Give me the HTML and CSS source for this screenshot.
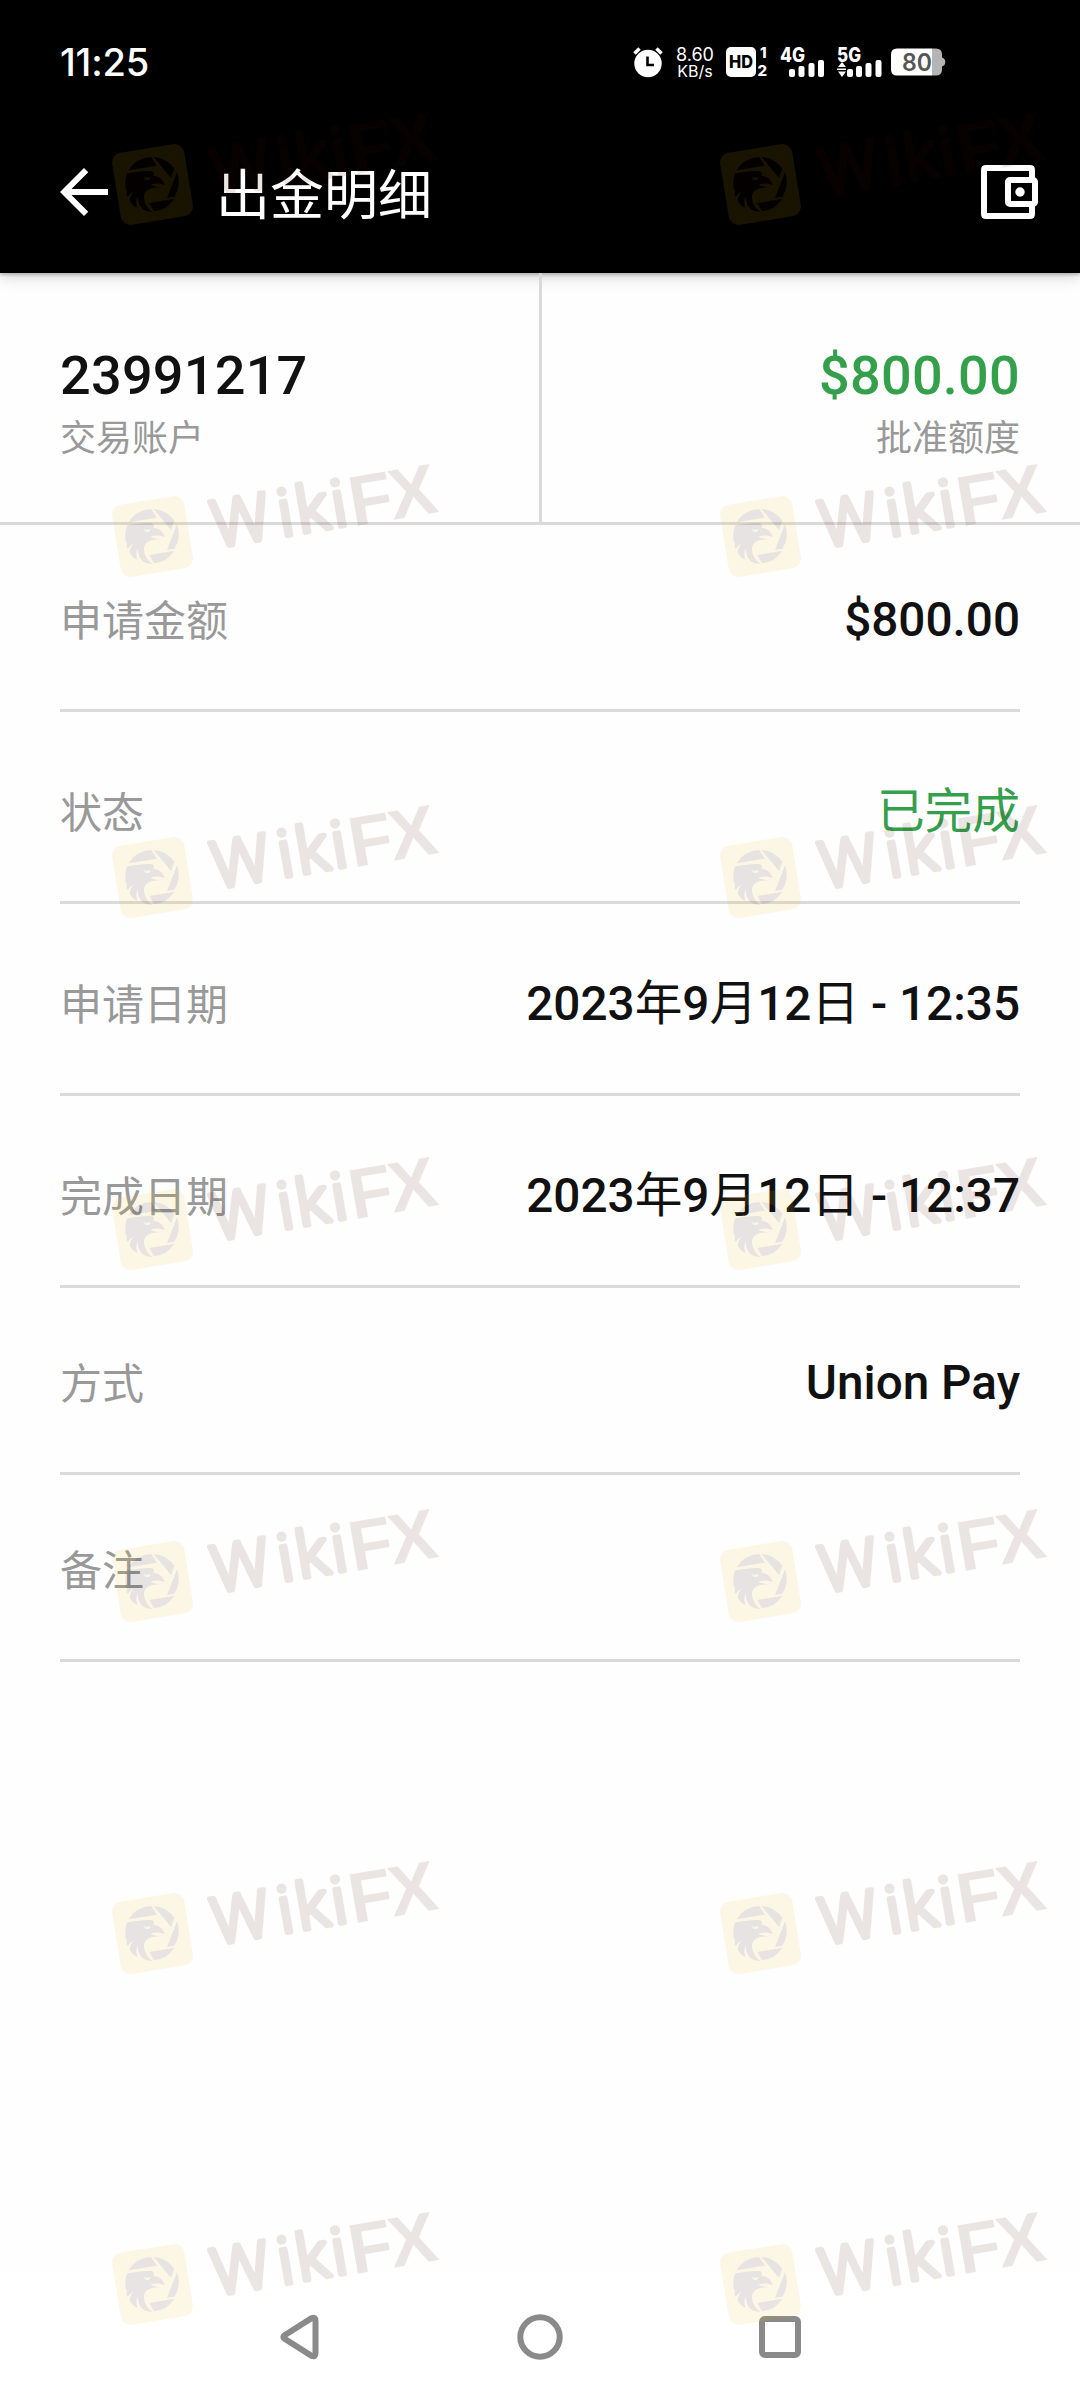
FILE: index.html
```html
<!DOCTYPE html>
<html lang="zh-CN">
<head>
<meta charset="utf-8">
<title>出金明细</title>
<link rel="stylesheet" href="styles.css">
</head>
<body>
<svg class="defs" width="0" height="0" aria-hidden="true">
  <symbol id="mark" viewBox="0 -50 340 150" overflow="visible">
    <rect x="4" y="4" width="73" height="73" rx="10" fill="#f0b90f" transform="rotate(-9.2 40.5 40.5)"/>
    <g transform="translate(-22 -63) scale(.33333)" fill="#320505">
      <path d="M116 268A82 82 0 0 1 183 228L201 254Z"/>
      <path d="M191 228A82 82 0 0 1 253 263L243 291Z"/>
      <path d="M261 273A82 82 0 0 1 253 347L231 351Z"/>
      <path d="M253 353A82 82 0 0 1 192 391L178 366Z"/>
      <path d="M112 277C140 273 168 268 187 271C193 275 193 280 190 284C208 286 223 298 223 313C211 307 196 306 181 311C191 317 202 315 210 321C184 316 164 328 162 345C161 362 170 382 187 392C164 393 145 382 143 347C138 357 138 369 142 380C128 374 120 364 119 356C120 346 125 340 130 332C121 337 116 344 113 348C109 342 108 336 112 332Q104 324 106 306C106 294 108 286 112 277Z"/>
      <path d="M160 288Q168 292 182 289Q181 297 172 297Q164 296 160 288Z" fill="#f0b90f"/>
    </g>
    <g class="mark-text" transform="translate(246.3 29.7) rotate(-9.8)">
      <text><tspan class="round" x="-144.500 -77.300 -58.500 -23" y="-2.500">Wiki</tspan><tspan x="-5 35.500" y="0">FX</tspan></text>
    </g>
  </symbol>
</svg>

<header class="top">
  <div class="status">
    <span class="clock">11:25</span>
    <div class="status-icons">
      <svg class="alarm" viewBox="0 0 30 30"><circle cx="15" cy="16.500" r="13.700" fill="#fff"/><path d="M1.500 6.500L6.500 1.500M23.500 1.500L28.500 6.500" stroke="#fff" stroke-width="3.500"/><path d="M14.500 9.500V18H21" fill="none" stroke="#000" stroke-width="2.600"/></svg>
      <span class="speed"><span>8.60</span><span>KB/s</span></span>
      <svg class="hd" viewBox="0 0 44 32"><rect y="1" width="30" height="30" rx="5" fill="#fff"/><text x="3" y="22" font-size="17.500" fill="#000" textLength="24" lengthAdjust="spacingAndGlyphs">HD</text><text x="34" y="12" font-size="15" fill="#fff">1</text><text x="31.500" y="30" font-size="15" fill="#fff">2</text></svg>
      <svg class="sig4" viewBox="0 0 46 32"><text x="0" y="15.500" font-size="19.500" fill="#fff" textLength="25" lengthAdjust="spacingAndGlyphs">4G</text><g fill="#fff"><rect x="9" y="23" width="6" height="8" rx="2"/><rect x="18.500" y="20" width="6" height="11" rx="2"/><rect x="28.500" y="17" width="6" height="14" rx="2"/><rect x="38" y="14" width="6" height="17" rx="2"/></g></svg>
      <svg class="sig5" viewBox="0 0 46 32"><text x="0" y="15.500" font-size="19.500" fill="#fff" textLength="24" lengthAdjust="spacingAndGlyphs">5G</text><g fill="#fff"><path d="M5 16L9 21H1ZM5 31L9 25.500H1Z"/><rect y="22.500" width="9" height="1.500"/><rect x="10" y="23" width="6" height="8" rx="2"/><rect x="19" y="20" width="6" height="11" rx="2"/><rect x="28.500" y="17" width="6" height="14" rx="2"/><rect x="38.500" y="14" width="6" height="17" rx="2"/></g></svg>
      <svg class="battery" viewBox="0 0 56 28"><path d="M41 .5H45Q51 .5 51 6.500V9.500Q54.300 10.500 54.300 14Q54.300 17.500 51 18.500V21.500Q51 27.500 45 27.500H41Z" fill="#b5b5b5"/><path d="M6 .5H41V27.500H6Q0 27.500 0 21.500V6.500Q0 .5 6 .5Z" fill="#fff"/><text class="level" x="11" y="22.500" font-size="24" fill="#555" textLength="30" lengthAdjust="spacingAndGlyphs">80</text></svg>
    </div>
  </div>
  <div class="appbar">
    <svg class="back" viewBox="0 0 24 24"><path d="M20 11H7.830l5.590-5.590L12 4l-8 8 8 8 1.410-1.410L7.830 13H20z" fill="#fff"/></svg>
    <h1>出金明细</h1>
    <svg class="wallet" viewBox="0 0 57 54"><g fill="none" stroke="#fff" stroke-width="6"><path d="M51 14V5Q51 3 49 3H5Q3 3 3 5V49Q3 51 5 51H49Q51 51 51 49V40"/><rect x="27" y="15" width="27" height="24" rx="2"/></g><circle cx="39" cy="27" r="4.700" fill="#fff"/></svg>
  </div>
</header>

<main>
  <section class="summary">
    <div class="cell"><strong>23991217</strong><span>交易账户</span></div>
    <div class="cell right"><strong class="green">$800.00</strong><span>批准额度</span></div>
  </section>
  <dl class="details">
    <div class="row"><dt>申请金额</dt><dd>$800.00</dd></div>
    <div class="row tall"><dt>状态</dt><dd class="green"><i>已完成</i></dd></div>
    <div class="row tall"><dt>申请日期</dt><dd>2023<i>年</i>9<i>月</i>12<i>日</i> - 12:35</dd></div>
    <div class="row tall"><dt>完成日期</dt><dd>2023<i>年</i>9<i>月</i>12<i>日</i> - 12:37</dd></div>
    <div class="row"><dt>方式</dt><dd>Union Pay</dd></div>
    <div class="row"><dt>备注</dt><dd></dd></div>
  </dl>
</main>

<nav class="navbar">
  <svg viewBox="0 0 48 48"><path d="M8.600 22.200L35.500 5.200Q39.500 3.500 39.500 8V40Q39.500 44.500 35.500 42.800L8.600 25.800Q6 24 8.600 22.200Z"/></svg>
  <svg viewBox="0 0 48 48"><circle cx="24" cy="24" r="19.700"/></svg>
  <svg viewBox="0 0 48 48"><rect x="6" y="6" width="36" height="36" rx="3"/></svg>
</nav>

<div class="marks" aria-hidden="true">
  <svg class="m r1"><use href="#mark"/></svg><svg class="m r1 b"><use href="#mark"/></svg>
  <svg class="m r2"><use href="#mark"/></svg><svg class="m r2 b"><use href="#mark"/></svg>
  <svg class="m r3"><use href="#mark"/></svg><svg class="m r3 b"><use href="#mark"/></svg>
  <svg class="m r4"><use href="#mark"/></svg><svg class="m r4 b"><use href="#mark"/></svg>
  <svg class="m r5"><use href="#mark"/></svg><svg class="m r5 b"><use href="#mark"/></svg>
  <svg class="m r6"><use href="#mark"/></svg><svg class="m r6 b"><use href="#mark"/></svg>
  <svg class="m r7"><use href="#mark"/></svg><svg class="m r7 b"><use href="#mark"/></svg>
</div>
</body>
</html>
```
FILE: styles.css
```css
* { box-sizing: border-box; }
body {
  margin: 0;
  width: 1080px;
  height: 2400px;
  position: relative;
  overflow: hidden;
  display: flex;
  flex-direction: column;
  background: #fefefe;
  color: #111;
  font-family: Roboto, "Noto Sans CJK SC", sans-serif;
}
svg { display: block; flex: none; overflow: visible; }
.defs { position: absolute; }
i { font-style: normal; font-weight: 400; }
.green { color: #34a04b; }

.top {
  height: 273px;
  flex: none;
  background: #000;
  color: #fff;
  box-shadow: 0 2px 3px rgba(0,0,0,.22), 0 5px 14px rgba(0,0,0,.14);
}
.status {
  height: 112px;
  padding: 12px 133px 0 60px;
  display: flex;
  align-items: center;
  justify-content: space-between;
  font-family: Inter, sans-serif;
}
.clock { font-size: 38px; font-weight: 450; letter-spacing: -.2px; }
.status-icons { display: flex; align-items: center; height: 32px; }
.status-icons text { font-family: Inter, sans-serif; font-weight: 800; }
.status-icons .level { font-weight: 600; }
.alarm { width: 30px; height: 30px; margin-right: 13px; }
.speed {
  width: 38px;
  margin-right: 12px;
  padding-top: 1px;
  display: flex;
  flex-direction: column;
  align-items: center;
  font-size: 18px;
  line-height: 16px;
}
.speed span:last-child { font-size: 16px; }
.hd { width: 44px; height: 32px; margin-right: 10px; }
.sig4 { width: 46px; height: 32px; margin-right: 11px; }
.sig5 { width: 46px; height: 32px; margin-right: 8px; }
.battery { width: 56px; height: 28px; }

.appbar {
  height: 161px;
  padding: 0 42px 2px 48px;
  display: flex;
  align-items: center;
}
.back { width: 72px; height: 72px; }
h1 {
  margin: 10px auto 0 96px;
  font-size: 54px;
  font-weight: 400;
  line-height: 80px;
}
.wallet { width: 57px; height: 54px; }

.summary {
  display: grid;
  grid-template-columns: 542px 1fr;
  height: 252px;
  border-bottom: 3px solid #dadada;
}
.cell {
  display: flex;
  flex-direction: column;
  padding: 71px 60px 0;
}
.cell:first-child { border-right: 3px solid #dadada; }
.right { align-items: flex-end; }
.cell strong {
  font-size: 54px;
  font-weight: 500;
  line-height: 64px;
  letter-spacing: .25px;
}
.cell span { font-size: 36px; line-height: 52px; color: #999; margin-top: 5px; }

.details { margin: 0 60px; }
.row {
  height: 187px;
  border-bottom: 3px solid #dadada;
  display: flex;
  align-items: center;
  justify-content: space-between;
}
.tall { height: 192px; }
dt { font-size: 42px; color: #999; line-height: 60px; padding-top: 10px; }
dd { margin: 0; font-size: 47.700px; font-weight: 500; line-height: 60px; padding-top: 5px; }
.tall dd { padding-top: 11px; }
.tall dt { padding-top: 15px; }

.navbar {
  margin-top: auto;
  height: 128px;
  flex: none;
  padding-top: 2px;
  background: #fff;
  display: flex;
  justify-content: center;
  align-items: center;
  gap: 192px;
}
.navbar svg { width: 48px; height: 48px; fill: none; stroke: #8a8a8a; stroke-width: 6; }

/* repeating brand overlay */
.marks { position: absolute; inset: 0; pointer-events: none; }
.m { position: absolute; left: 112px; width: 340px; height: 150px; opacity: .1; }
.b { left: 720px; }
.r1 { top: 94px; }
.r2 { top: 446px; }
.r3 { top: 787px; }
.r4 { top: 1139px; }
.r5 { top: 1491px; }
.r6 { top: 1843px; }
.r7 { top: 2194px; }
.mark-text {
  font-family: "Liberation Sans", sans-serif;
  font-size: 71px;
  font-weight: 700;
  fill: #460f05;
}
.round {
  font-family: Roboto, sans-serif;
  font-size: 65px;
  font-weight: 300;
  stroke: #460f05;
  stroke-width: 5;
  stroke-linejoin: round;
}
```
